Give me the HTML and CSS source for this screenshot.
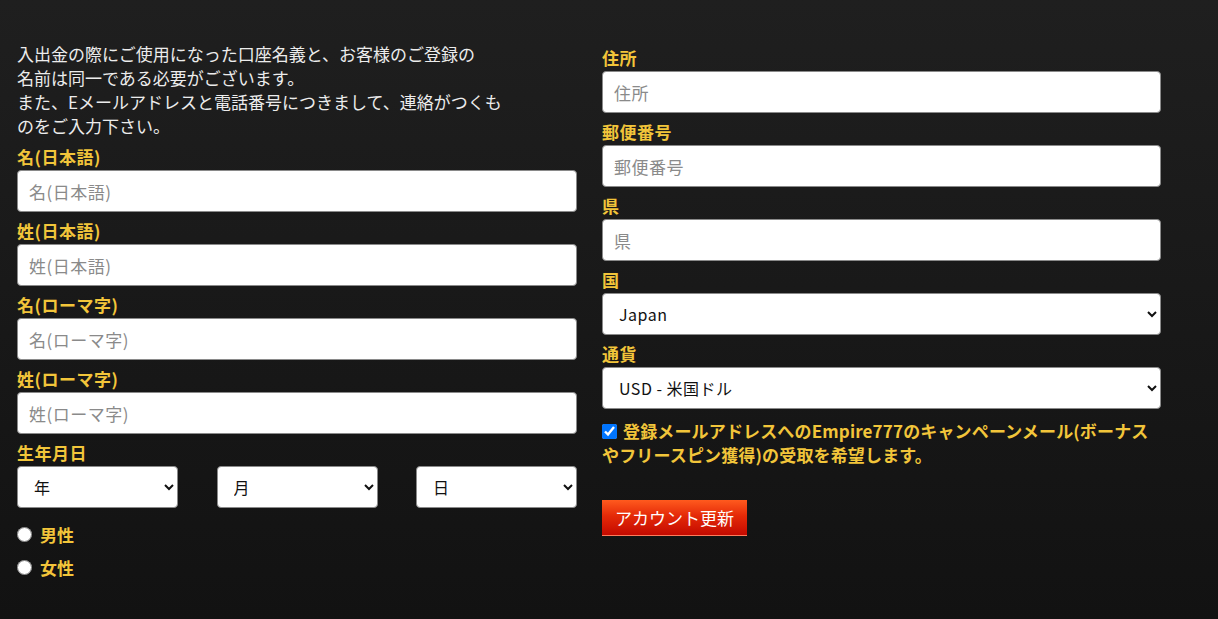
FILE: index.html
```html
<!DOCTYPE html>
<html lang="ja">
<head>
<meta charset="utf-8">
<title>アカウント</title>
<link rel="stylesheet" href="styles.css">
</head>
<body>
<form class="form">
  <div class="col">
    <p class="intro">
      <span class="line">入出金の際にご使用になった口座名義と、お客様のご登録の</span>
      <span class="line">名前は同一である必要がございます。</span>
      <span class="line">また、Eメールアドレスと電話番号につきまして、連絡がつくも</span>
      <span class="line">のをご入力下さい。</span>
    </p>
    <label class="label">名(日本語)</label>
    <input class="field" type="text" placeholder="名(日本語)">
    <label class="label">姓(日本語)</label>
    <input class="field" type="text" placeholder="姓(日本語)">
    <label class="label">名(ローマ字)</label>
    <input class="field" type="text" placeholder="名(ローマ字)">
    <label class="label">姓(ローマ字)</label>
    <input class="field" type="text" placeholder="姓(ローマ字)">
    <label class="label">生年月日</label>
    <div class="dob">
      <select class="field sel"><option>年</option></select>
      <select class="field sel"><option>月</option></select>
      <select class="field sel"><option>日</option></select>
    </div>
    <div class="radios">
      <label class="radio"><input type="radio" name="g"><span>男性</span></label>
      <label class="radio"><input type="radio" name="g"><span>女性</span></label>
    </div>
  </div>
  <div class="col col-right">
    <label class="label">住所</label>
    <input class="field" type="text" placeholder="住所">
    <label class="label">郵便番号</label>
    <input class="field" type="text" placeholder="郵便番号">
    <label class="label">県</label>
    <input class="field" type="text" placeholder="県">
    <label class="label">国</label>
    <select class="field sel"><option>Japan</option></select>
    <label class="label">通貨</label>
    <select class="field sel"><option>USD - 米国ドル</option></select>
    <label class="check"><input type="checkbox" checked> 登録メールアドレスへのEmpire777のキャンペーンメール(ボーナス<br>やフリースピン獲得)の受取を希望します。</label>
    <button class="btn" type="button">アカウント更新</button>
  </div>
</form>
</body>
</html>
```
FILE: styles.css
```css
html, body {
  margin: 0;
  height: 100%;
}
body {
  background: linear-gradient(#1f1f1f, #121212);
  font-family: "Noto Sans CJK JP", "Noto Sans", sans-serif;
  color: #e6e6e6;
}
.form {
  display: grid;
  grid-template-columns: 560px 559px;
  column-gap: 25px;
  padding: 39px 0 0 17px;
}
.col {
  display: flex;
  flex-direction: column;
}
.intro {
  margin: 3px 0 0;
  font-size: 17px;
  line-height: 24px;
  color: #ececec;
}
.line {
  display: block;
  white-space: nowrap;
}
.label {
  display: block;
  margin: 7px 0 1px;
  font-size: 17px;
  line-height: 24px;
  font-weight: bold;
  color: #f2c53a;
  letter-spacing: 0.5px;
}
.field {
  box-sizing: border-box;
  height: 42px;
  width: 100%;
  margin: 0;
  border: 1px solid #8a8a8a;
  border-radius: 4px;
  background: #fff;
  padding: 0 11px;
  font-family: "Noto Sans CJK JP", sans-serif;
  font-size: 17px;
  color: #222;
  letter-spacing: 0.5px;
}
.field::placeholder {
  color: #8a8a8a;
}
.sel {
  padding-left: 12px;
  font-size: 16px;
  color: #111;
}
.dob {
  display: flex;
  justify-content: space-between;
}
.dob .sel {
  width: 161px;
}
.radios {
  display: flex;
  flex-direction: column;
  gap: 9px;
  padding-top: 14px;
}
.radio {
  display: flex;
  align-items: center;
  gap: 8px;
  height: 24px;
  font-size: 17px;
  font-weight: bold;
  color: #f2c53a;
}
.radio input {
  margin: 0;
  width: 15px;
  height: 15px;
}
.check {
  margin-top: 10px;
  font-size: 17px;
  line-height: 24px;
  font-weight: bold;
  color: #f2c53a;
  letter-spacing: 0.15px;
  white-space: nowrap;
}
.check input {
  margin: 0 2px 0 0;
  width: 15px;
  height: 15px;
  vertical-align: -1px;
}
.btn {
  align-self: flex-start;
  margin-top: 33px;
  width: 145px;
  height: 36px;
  border: 0;
  border-bottom: 1px solid #ff7a5a;
  padding: 0;
  background: linear-gradient(#ff5a1e, #e42a08 45%, #c40a00);
  color: #fff;
  font-family: "Noto Sans CJK JP", sans-serif;
  font-size: 17px;
  cursor: pointer;
}
```
